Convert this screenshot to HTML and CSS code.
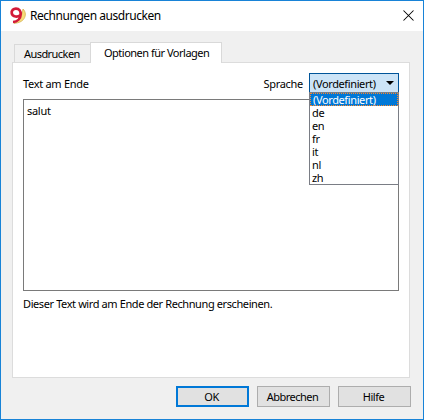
FILE: index.html
```html
<!DOCTYPE html>
<html lang="de">
<head>
<meta charset="utf-8">
<title>Rechnungen ausdrucken</title>
<link rel="stylesheet" href="styles.css">
</head>
<body>
<div class="window">
  <header class="titlebar">
    <svg class="logo" width="18" height="18" viewBox="0 0 18 18">
      <path d="M14 2C18.500 6 17 15.800 5 16.300C10 14.500 13 9 14 2Z" fill="#f7dc7a" stroke="#d4b04a" stroke-width=".8"/>
      <path d="M11.300 8C9.500 10.300 3.200 10.300 2.700 6.200C2.400 3.200 4.500 1.600 6.900 1.600C10.300 1.600 11.800 4 11.700 7.300C11.500 11.500 8.500 14.800 4 15" fill="none" stroke="#d31a38" stroke-width="2.700"/>
    </svg>
    <h1 class="title">Rechnungen ausdrucken</h1>
    <svg class="close" width="11" height="11" viewBox="0 0 11 11"><path d="M.5.5l10 10M10.500.5l-10 10" stroke="#000" stroke-width="1.050"/></svg>
  </header>
  <nav class="tabs">
    <div class="tab">Ausdrucken</div>
    <div class="tab active">Optionen für Vorlagen</div>
  </nav>
  <main class="panel">
    <div class="toolbar">
      <span>Text am Ende</span>
      <span class="lang">Sprache</span>
      <div class="combo">(Vordefiniert)
        <svg class="arrow" width="8" height="4" viewBox="0 0 8 4"><path d="M0 0h8L4 4z"/></svg>
        <ul class="list">
          <li class="selected">(Vordefiniert)</li>
          <li>de</li><li>en</li><li>fr</li><li>it</li><li>nl</li><li>zh</li>
        </ul>
      </div>
    </div>
    <div class="editor">salut</div>
    <p class="hint">Dieser Text wird am Ende der Rechnung erscheinen.</p>
  </main>
  <footer class="buttons">
    <div class="button default">OK</div>
    <div class="button">Abbrechen</div>
    <div class="button">Hilfe</div>
  </footer>
</div>
</body>
</html>
```
FILE: styles.css
```css
* { box-sizing: border-box; }
body {
  margin: 0;
  font: 11px/13px "Noto Sans", "Open Sans", sans-serif;
  color: #000;
  letter-spacing: -0.3px;
}
.window {
  width: 424px;
  height: 420px;
  border: 1px solid #1883d7;
  background: #f0f0f0;
  display: flex;
  flex-direction: column;
}
.titlebar {
  height: 30px;
  background: #fff;
  display: flex;
  align-items: center;
  padding: 0 9px 0 8px;
}
.logo { margin-right: 3px; }
.title {
  margin: 0;
  flex: 1;
  font-size: 12px;
  line-height: 16px;
  font-weight: 400;
  letter-spacing: -0.46px;
}
.close { margin-top: -2px; }
.tabs {
  height: 31px;
  display: flex;
  align-items: flex-end;
  padding-left: 13px;
}
.tab {
  width: 76px;
  height: 18px;
  border: 1px solid #d9d9d9;
  border-width: 1px 0 0 1px;
  padding: 2px 0 0 9px;
  white-space: nowrap;
  letter-spacing: -0.56px;
}
.tab.active {
  width: 132px;
  height: 21px;
  margin-bottom: -1px;
  border-right-width: 1px;
  background: #fff;
  padding: 3px 0 0 13px;
  letter-spacing: -0.5px;
  z-index: 1;
}
.panel {
  margin: 0 13px 0 11px;
  height: 316px;
  border: 1px solid #dcdcdc;
  background: #fff;
  padding: 10px 10px 0;
  white-space: nowrap;
}
.toolbar {
  height: 26px;
  display: flex;
}
.toolbar > span { padding-top: 4px; }
.toolbar > .lang { margin-left: auto; margin-right: 6px; }
.combo {
  position: relative;
  width: 90px;
  height: 20px;
  border: 1px solid #005499;
  background: #cce4f7;
  padding: 3px 0 0 3px;
  letter-spacing: -0.38px;
}
.arrow { position: absolute; right: 4px; top: 7px; }
.list {
  position: absolute;
  left: -1px;
  top: 18px;
  width: 90px;
  height: 93px;
  margin: 0;
  padding: 0;
  border: 1px solid #7a7d85;
  background: #fff;
  list-style: none;
}
.list li { height: 13px; padding-left: 2px; }
.list .selected {
  background: #0078d7;
  color: #fff;
  outline: 1px dotted #ff8728;
  outline-offset: -1px;
  padding-left: 3px;
}
.editor {
  height: 192px;
  border: 1px solid #7a7a7a;
  padding: 4px 3px;
}
.hint {
  margin: 6px 0 0;
  letter-spacing: -0.4px;
}
.buttons {
  margin-top: 8px;
  display: flex;
  justify-content: flex-end;
  gap: 8px;
  padding-right: 12px;
}
.button {
  width: 73px;
  height: 21px;
  border: 1px solid #adadad;
  background: #e1e1e1;
  display: flex;
  align-items: center;
  justify-content: center;
  padding-right: 2px;
  letter-spacing: -0.5px;
}
.button.default { border: 2px solid #0078d7; }
```
